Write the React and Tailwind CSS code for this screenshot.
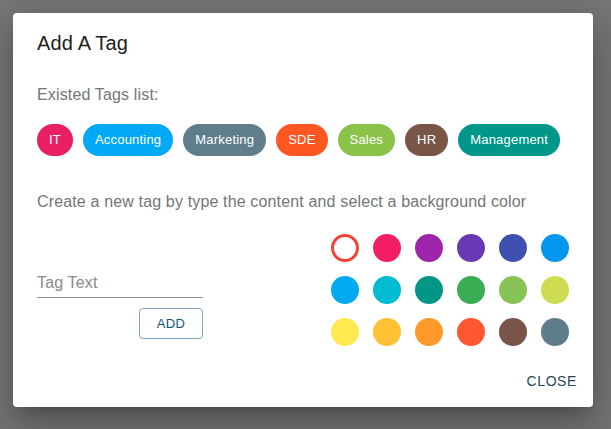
import React from 'react';

const tags = [
    { label: 'IT', color: 'bg-[#e91e63]' },
    { label: 'Accounting', color: 'bg-[#03a9f4]' },
    { label: 'Marketing', color: 'bg-[#607d8b]' },
    { label: 'SDE', color: 'bg-[#ff5722]' },
    { label: 'Sales', color: 'bg-[#8bc34a]' },
    { label: 'HR', color: 'bg-[#795548]' },
    { label: 'Management', color: 'bg-[#009688]' },
];

const swatches = [
    'bg-[#f44336]', 'bg-[#f41e66]', 'bg-[#9f24aa]', 'bg-[#6a37b5]', 'bg-[#3e51b1]', 'bg-[#0597ee]',
    'bg-[#03a9f1]', 'bg-[#00bbd2]', 'bg-[#009786]', 'bg-[#3aae55]', 'bg-[#88c356]', 'bg-[#cddc50]',
    'bg-[#ffe951]', 'bg-[#ffc033]', 'bg-[#ff992a]', 'bg-[#ff5730]', 'bg-[#795548]', 'bg-[#5e7c89]',
];

const App = () => {
    return (
        <div className="w-[611px] h-[429px] bg-[#767676] pt-[13px] pl-[13px] font-['Liberation_Sans',Arial,sans-serif] overflow-hidden">
            <div className="w-[580px] h-[394px] bg-white rounded-[4px] shadow-[0_11px_15px_-7px_rgba(0,0,0,0.2),0_24px_38px_3px_rgba(0,0,0,0.14),0_9px_46px_8px_rgba(0,0,0,0.12)] flex flex-col">
                <h2 className="px-6 pt-[17px] text-[20px] leading-[26px] tracking-[0.15px] text-[#212121]">Add A Tag</h2>

                <div className="px-6 pt-[27px]">
                    <p className="text-[16px] leading-[24px] tracking-[0.15px] text-[#757575]">Existed Tags list:</p>

                    <div className="flex gap-[10px] mt-[17px]">
                        {tags.map((tag) => (
                            <span
                                key={tag.label}
                                className={`h-8 flex items-center rounded-full px-3 text-[13px] tracking-[0.2px] text-white ${tag.color}`}
                            >
                                {tag.label}
                            </span>
                        ))}
                    </div>

                    <p className="mt-[34px] text-[16px] leading-[24px] tracking-[0.15px] text-[#757575]">
                        Create a new tag by type the content and select a background color
                    </p>

                    <div className="flex justify-between mt-5">
                        <div className="w-[166px] pt-[37px]">
                            <div className="h-[27px] border-b border-[#949494] text-[16px] leading-[24px] tracking-[0.15px] text-[#8a8a8a]">
                                Tag Text
                            </div>
                            <div className="flex justify-end mt-[10px]">
                                <button className="w-16 h-[31px] rounded-[4px] border border-[#7fa6bd] text-[13px] text-[#135577] tracking-[0.4px]">
                                    ADD
                                </button>
                            </div>
                        </div>

                        <div className="grid grid-cols-6 gap-[14px]">
                            {swatches.map((c, i) =>
                                i === 0 ? (
                                    <span key={i} className="w-7 h-7 rounded-full border-[3px] border-[#f44336] bg-white" />
                                ) : (
                                    <span key={i} className={`w-7 h-7 rounded-full ${c}`} />
                                )
                            )}
                        </div>
                    </div>
                </div>

                <div className="flex justify-end mt-auto p-2">
                    <button className="h-9 px-2 text-[14px] tracking-[0.6px] text-[#2b4555]">CLOSE</button>
                </div>
            </div>
        </div>
    );
};

export default App;
